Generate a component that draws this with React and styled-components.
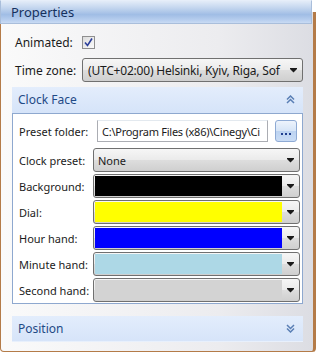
import React from 'react'
import styled, { createGlobalStyle } from 'styled-components'

const GlobalStyle = createGlobalStyle`
  html, body {
    margin: 0;
    padding: 0;
    background: #ffffff;
  }
  body {
    width: 316px;
    height: 354px;
    overflow: hidden;
    font-family: "Noto Sans", "Open Sans", sans-serif;
    font-size: 12px;
    color: #1b1b1b;
  }
`

const Frame = styled.div`
  width: 316px;
  height: 354px;
  display: flex;
  flex-direction: column;
`

const Header = styled.div`
  position: relative;
  z-index: 1;
  width: 312px;
  height: 25px;
  box-sizing: border-box;
  padding-left: 10px;
  display: flex;
  align-items: center;
  font-size: 13px;
  color: #15315e;
  border: 1px solid #a9bedb;
  border-top-color: #e6eef9;
  background: linear-gradient(#e3ecf8 0%, #c5d7ef 30%, #a0bde5 62%, #b6cdee 85%, #c9dbf3 100%);
`

const Body = styled.div`
  flex: 1;
  margin-top: -12px;
  margin-bottom: 2px;
  padding: 14px 10px 9px 11px;
  display: flex;
  flex-direction: column;
  border-left: 1px solid #b47b48;
  border-right: 3px solid #b47b48;
  border-bottom: 1px solid #b47b48;
  border-radius: 0 0 4px 4px;
  background: linear-gradient(to right, #fafafa, #ececef 70%, #dcdde3);
`

const TopRow = styled.div`
  display: flex;
  align-items: center;
  height: ${p => p.$h}px;
  margin-top: ${p => p.$mt}px;
  padding-left: 3px;
`

const TopLabel = styled.span`
  width: 67px;
  flex: none;
  font-size: 12px;
`

const Check = styled.span`
  width: 13px;
  height: 13px;
  box-sizing: border-box;
  border: 1px solid #8f8f8f;
  background: linear-gradient(135deg, #dcdcdc, #fbfbfb);
  display: flex;
  align-items: center;
  justify-content: center;
`

const Combo = styled.div`
  flex: 1;
  height: 100%;
  box-sizing: border-box;
  border: 1px solid #707070;
  border-radius: 3px;
  display: flex;
  align-items: center;
  padding-left: ${p => p.$pl || 5}px;
  background: linear-gradient(#f6f6f6 0%, #ebebeb 48%, #dddddd 52%, #cfcfcf 100%);
  overflow: hidden;
  white-space: nowrap;
`

const ComboText = styled.span`
  flex: 1;
  overflow: hidden;
  font-size: ${p => p.$fs || 12}px;
  letter-spacing: ${p => p.$ls || 0}px;
`

const Arrow = styled.span`
  width: 17px;
  flex: none;
  display: flex;
  align-items: center;
  justify-content: center;
`

const Group = styled.div`
  margin-top: ${p => p.$mt || 5}px;
  display: flex;
  flex-direction: column;
`

const GroupHeader = styled.div`
  height: 26px;
  box-sizing: border-box;
  padding: 0 8px 0 6px;
  display: flex;
  align-items: center;
  justify-content: space-between;
  color: #1f4a86;
  font-size: 12px;
  background: linear-gradient(#e3edfc, #d6e4f9);
  border-bottom: 1px solid ${p => p.$line || '#d6e4f9'};
`

const GroupBox = styled.div`
  border: 1px solid #8ea8cf;
  background: #ffffff;
  padding: 6px 2px 1px 6px;
  display: flex;
  flex-direction: column;
  gap: 2px;
`

const FieldRow = styled.div`
  display: flex;
  align-items: center;
  height: ${p => p.$h || 24}px;
  margin-bottom: ${p => p.$mb || 0}px;
`

const FieldLabel = styled.span`
  width: ${p => p.$w || 74}px;
  flex: none;
  font-size: 11px;
  color: #1b1b1b;
`

const TextBox = styled.div`
  width: 171px;
  height: 100%;
  box-sizing: border-box;
  border: 1px solid #abadb3;
  border-top-color: #e3e9ef;
  padding-left: 4px;
  display: flex;
  align-items: center;
  white-space: nowrap;
  overflow: hidden;
  font-size: 11px;
  letter-spacing: -0.25px;
  background: #ffffff;
`

const Browse = styled.div`
  width: 22px;
  height: 22px;
  margin-left: 7px;
  box-sizing: border-box;
  border: 1px solid #8eaad4;
  border-radius: 3px;
  background: linear-gradient(#eef4fc 0%, #d7e5f7 48%, #bcd3f1 52%, #c9dcf5 100%);
  display: flex;
  align-items: flex-end;
  justify-content: center;
  padding-bottom: 6px;
`

const ColorCombo = styled.div`
  flex: 1;
  height: 100%;
  box-sizing: border-box;
  border: 1px solid #707070;
  border-radius: 3px;
  display: flex;
  padding: 1px 0 1px 1px;
  background: linear-gradient(#f6f6f6 0%, #ebebeb 48%, #dddddd 52%, #cfcfcf 100%);
`

const Swatch = styled.span`
  flex: 1;
  background: ${p => p.$c};
`

const Spacer = styled.div`
  flex: 1;
`

const TriDown = () => (
  <svg width="7" height="5" viewBox="0 0 7 5">
    <path d="M0 0.5h7" stroke="#1b1b1b" strokeWidth="1" />
    <path d="M0 1L7 1L3.5 4.5Z" fill="#1b1b1b" />
  </svg>
)

const Chevrons = ({ up }) => (
  <svg width="9" height="9" viewBox="0 0 9 9" style={{ transform: up ? 'none' : 'rotate(180deg)' }}>
    <path d="M1 4.5L4.5 1L8 4.5M1 8L4.5 4.5L8 8" fill="none" stroke="#5a7fb5" strokeWidth="1.5" />
  </svg>
)

const CheckMark = () => (
  <svg width="9" height="9" viewBox="0 0 9 9">
    <path d="M1 4.5L3.5 7.5L8 0.5" fill="none" stroke="#2c3f9a" strokeWidth="1.6" />
  </svg>
)

const colors = [
  ['Background:', '#000000'],
  ['Dial:', '#ffff00'],
  ['Hour hand:', '#0000ff'],
  ['Minute hand:', '#add8e6'],
  ['Second hand:', '#d3d3d3'],
]

const App = () => (
  <Frame>
    <GlobalStyle />
    <Header>Properties</Header>
    <Body>
      <TopRow $h={14} $mt={9}>
        <TopLabel>Animated:</TopLabel>
        <Check><CheckMark /></Check>
      </TopRow>
      <TopRow $h={24} $mt={9}>
        <TopLabel>Time zone:</TopLabel>
        <Combo>
          <ComboText $ls={-0.2}>(UTC+02:00) Helsinki, Kyiv, Riga, Sof</ComboText>
          <Arrow><TriDown /></Arrow>
        </Combo>
      </TopRow>
      <Group>
        <GroupHeader>
          <span>Clock Face</span>
          <Chevrons up />
        </GroupHeader>
        <GroupBox>
          <FieldRow $h={22} $mb={4}>
            <FieldLabel $w={78}>Preset folder:</FieldLabel>
            <TextBox>C:\Program Files (x86)\Cinegy\Ci</TextBox>
            <Browse>
              <svg width="12" height="2" viewBox="0 0 12 2">
                <rect x="1" y="0" width="2" height="2" fill="#1f3f8f" />
                <rect x="5" y="0" width="2" height="2" fill="#1f3f8f" />
                <rect x="9" y="0" width="2" height="2" fill="#1f3f8f" />
              </svg>
            </Browse>
          </FieldRow>
          <FieldRow>
            <FieldLabel>Clock preset:</FieldLabel>
            <Combo $pl={4}>
              <ComboText $fs={11}>None</ComboText>
              <Arrow><TriDown /></Arrow>
            </Combo>
          </FieldRow>
          {colors.map(([label, c]) => (
            <FieldRow key={label}>
              <FieldLabel>{label}</FieldLabel>
              <ColorCombo>
                <Swatch $c={c} />
                <Arrow><TriDown /></Arrow>
              </ColorCombo>
            </FieldRow>
          ))}
        </GroupBox>
      </Group>
      <Group $mt={12}>
        <GroupHeader $line="#e8f0fc">
          <span>Position</span>
          <Chevrons />
        </GroupHeader>
      </Group>
      <Spacer />
    </Body>
  </Frame>
)

export default App
